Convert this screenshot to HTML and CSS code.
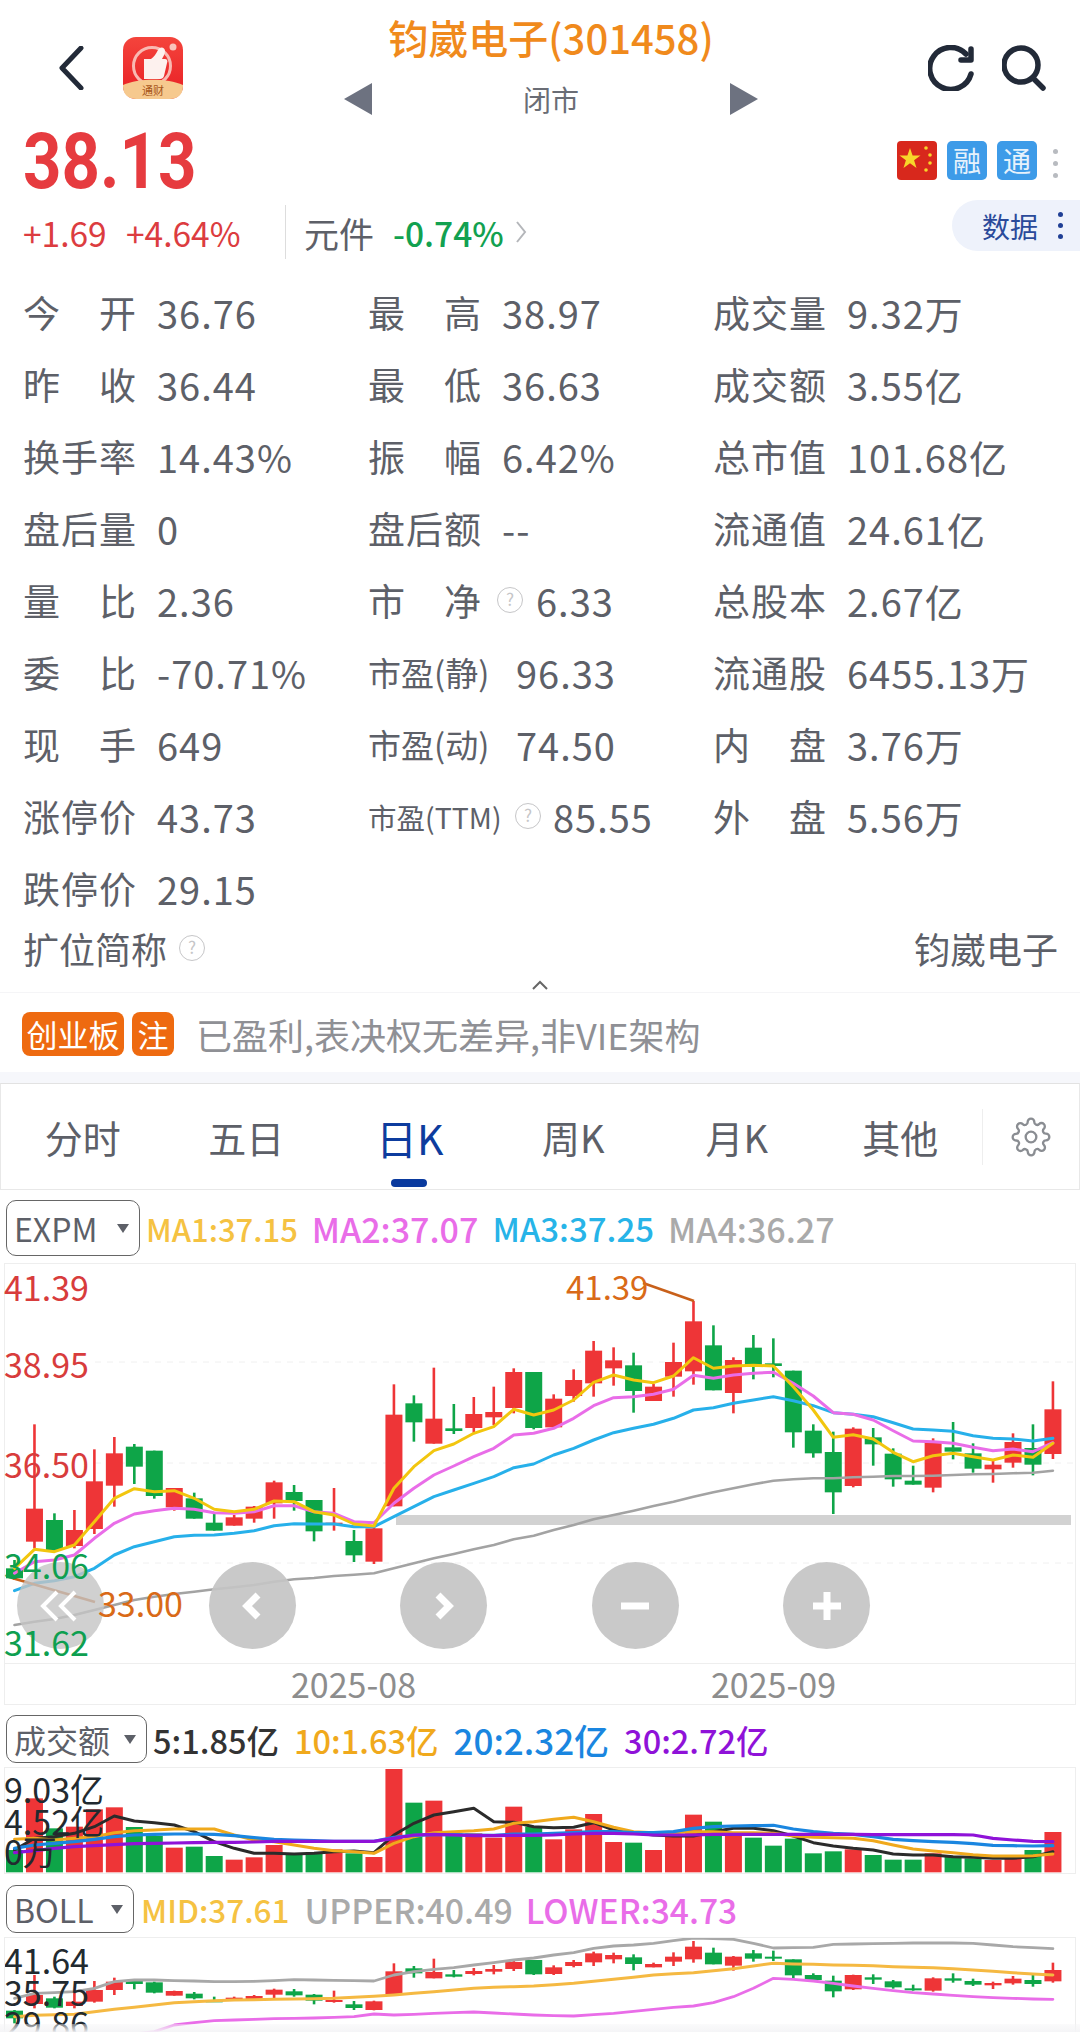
FILE: index.html
```html
<!DOCTYPE html>
<html lang="zh-CN">
  <head>
    <meta charset="UTF-8" />
    <meta name="viewport" content="width=device-width, initial-scale=1.0" />
    <title>钧崴电子(301458)</title>
    <link rel="stylesheet" href="styles.css">
  </head>
  <body>
    <header class="topbar">
      <div class="topbar-left">
        <svg class="back-icon" width="26" height="44" viewBox="0 0 26 44"><path d="M23 2 L4 22 L23 42" /></svg>
        <svg class="app-icon" width="60" height="62" viewBox="0 0 60 62">
          <defs>
            <linearGradient id="appRed" x1="0" y1="0" x2="0" y2="1">
              <stop offset="0" stop-color="#f4443c" />
              <stop offset="1" stop-color="#e81e24" />
            </linearGradient>
          </defs>
          <rect width="60" height="62" rx="13" fill="url(#appRed)" />
          <circle cx="29" cy="29" r="18.5" fill="none" stroke="#f9b9b2" stroke-width="3" />
          <path d="M21 22 H28 C31 20 33 17 35 13 C37 9 42 10 42 14 C42 17 40 20 39 22 H42 C44 22 45 24 44 26 L41 39 C40.5 41 39 42 37 42 H21 Z" fill="#fdf1ee" />
          <circle cx="50" cy="10" r="3.5" fill="#f9c4bc" />
          <path d="M0 48 C16 41 44 41 60 48 V49 C60 57 55 62 47 62 H13 C5 62 0 57 0 49 Z" fill="#f6c98e" />
          <text x="30" y="58" class="app-icon-text">通财</text>
        </svg>
      </div>
      <div class="topbar-center">
        <div class="stock-title">钧崴电子(301458)</div>
        <div class="stock-sub">
          <span class="tri tri-left"></span>
          <span class="market-state">闭市</span>
          <span class="tri tri-right"></span>
        </div>
      </div>
      <div class="topbar-right">
        <svg class="tool-icon" width="48" height="46" viewBox="0 0 48 46"><path d="M38 9 A21 21 0 1 0 43 29" /><path d="M43 4 V15 H33" /></svg>
        <svg class="tool-icon" width="44" height="46" viewBox="0 0 44 46"><circle cx="19" cy="20" r="17" /><path d="M31 33 L41 43" /></svg>
      </div>
    </header>

    <section class="quote-top">
      <div class="price">38.13</div>
      <div class="badges">
        <svg class="flag" width="40" height="39" viewBox="0 0 40 39">
          <rect width="40" height="39" rx="4" fill="#d8281c" />
          <polygon points="13,7 15.6,14.6 23.5,14.6 17.1,19.3 19.5,27 13,22.2 6.5,27 8.9,19.3 2.5,14.6 10.4,14.6" fill="#f8d62a" />
          <circle cx="29" cy="7" r="1.8" fill="#f8d62a" />
          <circle cx="33" cy="14" r="1.8" fill="#f8d62a" />
          <circle cx="33" cy="22" r="1.8" fill="#f8d62a" />
          <circle cx="29" cy="29" r="1.8" fill="#f8d62a" />
        </svg>
        <span class="badge">融</span>
        <span class="badge">通</span>
        <span class="dots dots-gray"><i></i><i></i><i></i></span>
      </div>
    </section>

    <section class="quote-sub">
      <div class="change">+1.69</div>
      <div class="change change-pct">+4.64%</div>
      <div class="sector">
        <span class="sector-name">元件</span>
        <span class="sector-pct">-0.74%</span>
        <svg class="sector-more" width="12" height="24" viewBox="0 0 12 24"><path d="M2 2 L10 12 L2 22" /></svg>
      </div>
      <div class="data-pill">数据<span class="dots dots-navy"><i></i><i></i><i></i></span></div>
    </section>

    <section class="stats">
      <div class="stat"><span class="stat-label">今开</span><span>36.76</span></div>
      <div class="stat"><span class="stat-label">最高</span><span>38.97</span></div>
      <div class="stat"><span class="stat-label">成交量</span><span>9.32万</span></div>

      <div class="stat"><span class="stat-label">昨收</span><span>36.44</span></div>
      <div class="stat"><span class="stat-label">最低</span><span>36.63</span></div>
      <div class="stat"><span class="stat-label">成交额</span><span>3.55亿</span></div>

      <div class="stat"><span class="stat-label">换手率</span><span>14.43%</span></div>
      <div class="stat"><span class="stat-label">振幅</span><span>6.42%</span></div>
      <div class="stat"><span class="stat-label">总市值</span><span>101.68亿</span></div>

      <div class="stat"><span class="stat-label">盘后量</span><span>0</span></div>
      <div class="stat"><span class="stat-label">盘后额</span><span>--</span></div>
      <div class="stat"><span class="stat-label">流通值</span><span>24.61亿</span></div>

      <div class="stat"><span class="stat-label">量比</span><span>2.36</span></div>
      <div class="stat"><span class="stat-label">市净</span><span class="help help-pe">?</span><span>6.33</span></div>
      <div class="stat"><span class="stat-label">总股本</span><span>2.67亿</span></div>

      <div class="stat"><span class="stat-label">委比</span><span>-70.71%</span></div>
      <div class="stat"><span class="stat-label stat-label-mid">市盈(静)</span><span>96.33</span></div>
      <div class="stat"><span class="stat-label">流通股</span><span>6455.13万</span></div>

      <div class="stat"><span class="stat-label">现手</span><span>649</span></div>
      <div class="stat"><span class="stat-label stat-label-mid">市盈(动)</span><span>74.50</span></div>
      <div class="stat"><span class="stat-label">内盘</span><span>3.76万</span></div>

      <div class="stat"><span class="stat-label">涨停价</span><span>43.73</span></div>
      <div class="stat"><span class="stat-label stat-label-small">市盈(TTM)</span><span class="help help-ttm">?</span><span>85.55</span></div>
      <div class="stat"><span class="stat-label">外盘</span><span>5.56万</span></div>

      <div class="stat"><span class="stat-label">跌停价</span><span>29.15</span></div>
    </section>

    <section class="short-name">
      <div class="short-name-label">扩位简称<span class="help help-short">?</span></div>
      <div>钧崴电子</div>
    </section>
    <div class="collapse">
      <svg width="18" height="10" viewBox="0 0 18 10"><path d="M2 9 L9 2 L16 9" /></svg>
    </div>

    <section class="tag-row">
      <span class="tag">创业板</span>
      <span class="tag tag-short">注</span>
      <span class="tag-text">已盈利,表决权无差异,非VIE架构</span>
    </section>
    <div class="band"></div>

    <nav class="tabs">
      <span class="tab">分时</span>
      <span class="tab">五日</span>
      <span class="tab tab-active">日K</span>
      <span class="tab">周K</span>
      <span class="tab">月K</span>
      <span class="tab">其他</span>
      <span class="tab-gear">
        <svg width="40" height="40" viewBox="0 0 24 24"><circle cx="12" cy="12" r="3.2" /><path d="M19.4 15a1.65 1.65 0 0 0 .33 1.82l.06.06a2 2 0 0 1 0 2.83 2 2 0 0 1-2.83 0l-.06-.06a1.65 1.65 0 0 0-1.82-.33 1.65 1.65 0 0 0-1 1.51V21a2 2 0 0 1-2 2 2 2 0 0 1-2-2v-.09A1.65 1.65 0 0 0 9 19.4a1.65 1.65 0 0 0-1.82.33l-.06.06a2 2 0 0 1-2.83 0 2 2 0 0 1 0-2.83l.06-.06a1.65 1.65 0 0 0 .33-1.82 1.65 1.65 0 0 0-1.51-1H3a2 2 0 0 1-2-2 2 2 0 0 1 2-2h.09A1.65 1.65 0 0 0 4.6 9a1.65 1.65 0 0 0-.33-1.82l-.06-.06a2 2 0 0 1 0-2.83 2 2 0 0 1 2.83 0l.06.06a1.65 1.65 0 0 0 1.82.33H9a1.65 1.65 0 0 0 1-1.51V3a2 2 0 0 1 2-2 2 2 0 0 1 2 2v.09a1.65 1.65 0 0 0 1 1.51 1.65 1.65 0 0 0 1.82-.33l.06-.06a2 2 0 0 1 2.83 0 2 2 0 0 1 0 2.83l-.06.06a1.65 1.65 0 0 0-.33 1.82V9a1.65 1.65 0 0 0 1.51 1H21a2 2 0 0 1 2 2 2 2 0 0 1-2 2h-.09a1.65 1.65 0 0 0-1.51 1z" /></svg>
      </span>
    </nav>

    <div class="legend legend-main">
      <span class="picker picker-expm">EXPM<i class="caret"></i></span>
      <span class="c-yellow">MA1:37.15</span>
      <span class="c-pink ma-wide">MA2:37.07</span>
      <span class="c-sky ma-mid">MA3:37.25</span>
      <span class="c-gray ma-wide">MA4:36.27</span>
    </div>

    <div class="chart chart-main">
      <svg id="kline" width="1070" height="399"></svg>
      <div class="pan-buttons">
        <span class="pan-button">
          <svg width="44" height="36" viewBox="0 0 44 36"><path d="M18 4 L4 18 L18 32 M36 4 L22 18 L36 32" class="pan-thin" /></svg>
        </span>
        <span class="pan-button">
          <svg width="22" height="30" viewBox="0 0 22 30"><path d="M17 4 L6 15 L17 26" /></svg>
        </span>
        <span class="pan-button">
          <svg width="22" height="30" viewBox="0 0 22 30"><path d="M5 4 L16 15 L5 26" /></svg>
        </span>
        <span class="pan-button">
          <svg width="32" height="32" viewBox="0 0 32 32"><path d="M2 16 H30" /></svg>
        </span>
        <span class="pan-button">
          <svg width="32" height="32" viewBox="0 0 32 32"><path d="M2 16 H30 M16 2 V30" /></svg>
        </span>
      </div>
      <span class="axis axis-red axis-1">41.39</span>
      <span class="axis axis-red axis-2">38.95</span>
      <span class="axis axis-red axis-3">36.50</span>
      <span class="axis axis-green axis-4">34.06</span>
      <span class="axis axis-green axis-5">31.62</span>
      <span class="mark mark-low">33.00</span>
      <span class="mark mark-high">41.39</span>
    </div>
    <div class="dates">
      <span>2025-08</span>
      <span>2025-09</span>
    </div>

    <div class="legend legend-vol">
      <span class="picker picker-vol">成交额<i class="caret"></i></span>
      <span class="c-dark">5:1.85亿</span>
      <span class="c-amber">10:1.63亿</span>
      <span class="c-blue vol-wide">20:2.32亿</span>
      <span class="c-purple">30:2.72亿</span>
    </div>
    <div class="chart chart-vol">
      <svg id="volume" width="1070" height="105"></svg>
      <span class="axis axis-dark vol-1">9.03亿</span>
      <span class="axis axis-dark vol-2">4.52亿</span>
      <span class="axis axis-dark vol-3">0万</span>
    </div>

    <div class="legend legend-boll">
      <span class="picker picker-boll">BOLL<i class="caret"></i></span>
      <span class="c-yellow">MID:37.61</span>
      <span class="c-gray boll-upper">UPPER:40.49</span>
      <span class="c-pink boll-lower">LOWER:34.73</span>
    </div>
    <div class="chart chart-boll">
      <svg id="boll" width="1070" height="94"></svg>
      <span class="axis axis-dark boll-1">41.64</span>
      <span class="axis axis-dark boll-2">35.75</span>
      <span class="axis axis-dark boll-3">29.86</span>
    </div>
    <div class="bottom-fade"></div>

    <script src="chart.js"></script>
  </body>
</html>
```

FILE: styles.css
```css
* {
  box-sizing: border-box;
}

body {
  width: 1080px;
  height: 2032px;
  margin: 0;
  overflow: hidden;
  position: relative;
  background-color: #fff;
  color: #5d6068;
  font-family: "Noto Sans CJK SC", "Noto Sans", sans-serif;
}

/* top bar */
.topbar {
  display: flex;
  height: 130px;
}

.topbar-left {
  width: 344px;
  display: flex;
  align-items: flex-start;
  padding: 46px 0 0 58px;
}

.back-icon {
  fill: none;
  stroke: #222a38;
  stroke-width: 5;
  stroke-linecap: round;
  stroke-linejoin: round;
}

.app-icon {
  margin: -9px 0 0 39px;
}

.app-icon-text {
  font-size: 11px;
  fill: #a8561a;
  text-anchor: middle;
}

.topbar-center {
  width: 414px;
  display: flex;
  flex-direction: column;
  align-items: center;
}

.stock-title {
  height: 74px;
  line-height: 74px;
  white-space: nowrap;
  font-size: 40px;
  font-weight: 500;
  color: #f08a1c;
}

.stock-sub {
  width: 100%;
  height: 50px;
  display: flex;
  justify-content: space-between;
  align-items: center;
}

.tri {
  width: 0;
  height: 0;
  border-top: 16px solid transparent;
  border-bottom: 16px solid transparent;
}

.tri-left {
  border-right: 28px solid #6d7280;
}

.tri-right {
  border-left: 28px solid #6d7280;
}

.market-state {
  font-size: 28px;
  color: #6a6d75;
}

.topbar-right {
  flex: 1;
  display: flex;
  justify-content: flex-end;
  align-items: flex-start;
  gap: 26px;
  padding: 45px 34px 0 0;
}

.tool-icon {
  fill: none;
  stroke: #222a38;
  stroke-width: 5.5;
  stroke-linecap: round;
  stroke-linejoin: round;
}

/* quote */
.quote-top {
  height: 70px;
  display: flex;
  justify-content: space-between;
  padding-left: 23px;
}

.price {
  line-height: 64px;
  font-family: "Roboto", sans-serif;
  font-size: 78px;
  font-weight: 700;
  color: #e63b3f;
  transform: scaleX(0.86);
  transform-origin: left center;
}

.badges {
  display: flex;
  align-items: flex-start;
  gap: 10px;
  padding: 11px 0 0 0;
}

.badge {
  width: 40px;
  height: 39px;
  line-height: 38px;
  border-radius: 5px;
  background-color: #3d9be8;
  color: #e6f2fc;
  font-size: 28px;
  text-align: center;
}

.dots {
  display: flex;
  flex-direction: column;
  gap: 7px;
}

.dots i {
  display: block;
  width: 5px;
  height: 5px;
  border-radius: 50%;
  background-color: currentColor;
}

.dots-gray {
  color: #b8bbc0;
  padding: 8px 22px 0 6px;
}

.quote-sub {
  height: 78px;
  display: flex;
  padding: 0 0 14px 23px;
  align-items: center;
}

.change {
  width: 103px;
  font-size: 33.5px;
  color: #dc3c40;
}

.change-pct {
  width: 159px;
}

.sector {
  height: 54px;
  display: flex;
  align-items: center;
  padding-left: 18px;
  border-left: 1px solid #ddd;
  white-space: nowrap;
}

.sector-name {
  width: 89px;
  font-size: 35px;
}

.sector-pct {
  width: 122px;
  font-size: 33.5px;
  font-weight: 500;
  color: #12a150;
}

.sector-more {
  fill: none;
  stroke: #b4b6ba;
  stroke-width: 2;
}

.data-pill {
  margin: -13px 0 0 auto;
  width: 128px;
  height: 51px;
  display: flex;
  align-items: center;
  padding-left: 30px;
  border-radius: 26px 0 0 26px;
  background-color: #eef2fb;
  color: #2a4a9a;
  font-size: 28px;
}

.dots-navy {
  color: #1f3f95;
  gap: 6px;
  margin-left: 20px;
}

/* stat grid */
.stats {
  display: grid;
  grid-template-columns: 345px 345px 1fr;
  grid-auto-rows: 72px;
  margin-top: -2px;
  padding-left: 23px;
  font-size: 37px;
}

.stat {
  display: flex;
  align-items: center;
  white-space: nowrap;
}

.stat span:last-child {
  font-size: 38px;
  letter-spacing: 1px;
}

.stat-label {
  width: 113px;
  margin-right: 21px;
  text-align-last: justify;
}

.stat-label-mid {
  width: 127px;
  font-size: 33px;
  text-align-last: auto;
}

.stat-label-small {
  width: 135px;
  margin-right: 12px;
  font-size: 28.5px;
  text-align-last: auto;
}

.help {
  display: inline-block;
  width: 26px;
  height: 26px;
  line-height: 22px;
  border: 1.5px solid #c6c6c8;
  border-radius: 50%;
  color: #c6c6c8;
  font-size: 17px;
  text-align: center;
}

.help-pe {
  margin: 0 13px 0 -5px;
}

.help-ttm {
  margin-right: 12px;
}

.help-short {
  margin-left: 12px;
}

.short-name {
  height: 48px;
  display: flex;
  justify-content: space-between;
  align-items: center;
  padding: 0 22px 0 23px;
  font-size: 36px;
}

.short-name-label {
  display: flex;
  align-items: center;
}

.collapse {
  height: 21px;
  display: flex;
  justify-content: center;
  align-items: flex-end;
  padding-bottom: 2px;
  border-bottom: 1px solid #f5f5f7;
}

.collapse svg {
  fill: none;
  stroke: #666;
  stroke-width: 2;
}

.tag-row {
  height: 79px;
  display: flex;
  align-items: center;
  padding: 3px 0 0 22px;
  gap: 8px;
}

.tag {
  width: 102px;
  height: 44px;
  line-height: 43px;
  border-radius: 8px;
  background-color: #ee6a10;
  color: #fff;
  font-size: 31px;
  text-align: center;
}

.tag-short {
  width: 42px;
}

.tag-text {
  margin-left: 14px;
  font-size: 36px;
  color: #8f9095;
  white-space: nowrap;
}

.band {
  height: 11px;
  background-color: #f6f7fb;
}

/* period tabs */
.tabs {
  height: 107px;
  display: flex;
  align-items: center;
  border: 1px solid #e8e8e8;
  border-top-color: #e2e2e2;
  font-size: 38px;
}

.tab {
  position: relative;
  width: 163.5px;
  height: 100%;
  line-height: 106px;
  text-align: center;
}

.tab-active {
  color: #0d3c9e;
  font-size: 41px;
}

.tab-active::after {
  content: "";
  position: absolute;
  left: 63px;
  bottom: 2px;
  width: 36px;
  height: 8px;
  border-radius: 4px;
  background-color: #0a3a9e;
}

.tab-gear {
  height: 56px;
  flex: 1;
  display: flex;
  justify-content: center;
  align-items: center;
  border-left: 1px solid #eee;
}

.tab-gear svg {
  fill: none;
  stroke: #8a8d92;
  stroke-width: 1.4;
}

/* legends over each chart */
.legend {
  display: flex;
  align-items: center;
  padding-left: 6px;
  white-space: nowrap;
  font-size: 32px;
}

.legend-main {
  height: 73px;
  padding-top: 10px;
  padding-bottom: 7px;
  gap: 14px;
  font-size: 31px;
  font-weight: 500;
}

.legend-main .picker {
  margin-right: -8px;
  font-size: 32px;
}

.ma-wide {
  font-size: 34px;
}

.ma-mid {
  font-size: 33px;
}

.legend-vol {
  height: 62px;
  padding-top: 10px;
  padding-bottom: 4px;
  gap: 15px;
  font-size: 32.5px;
  font-weight: 500;
}

.legend-vol .picker {
  margin-right: -9px;
  font-size: 32px;
}

.vol-wide {
  font-size: 35px;
}

.legend-boll {
  height: 63px;
  padding-top: 11px;
  padding-bottom: 4px;
  gap: 7px;
  font-size: 31.5px;
  font-weight: 500;
}

.legend-boll .picker {
  font-size: 32px;
}

.boll-upper {
  margin-left: 8px;
  font-size: 33.8px;
}

.boll-lower {
  margin-left: 6px;
  font-size: 33.6px;
}

.picker {
  height: 100%;
  display: flex;
  align-items: center;
  justify-content: space-between;
  padding: 0 10px 0 7px;
  border: 1px solid #666;
  border-radius: 10px;
  color: #5d6068;
  font-weight: 400;
}

.picker-expm {
  width: 134px;
}

.picker-vol {
  width: 141px;
}

.picker-boll {
  width: 128px;
}

.caret {
  width: 0;
  height: 0;
  border-left: 6px solid transparent;
  border-right: 6px solid transparent;
  border-top: 9px solid #5d6068;
}

.c-yellow { color: #f5c242; }
.c-pink { color: #e96de8; }
.c-sky { color: #27b4e8; }
.c-gray { color: #aaa; }
.c-dark { color: #333; }
.c-amber { color: #f0a91c; }
.c-blue { color: #1a86e0; }
.c-purple { color: #8f12d8; }

/* chart boxes */
.chart {
  position: relative;
  margin: 0 4px;
  border: 1px solid #eee;
}

.chart svg {
  display: block;
}

.chart-main {
  height: 401px;
}

.chart-vol {
  height: 107px;
}

.chart-boll {
  height: 96px;
  overflow: hidden;
}

.axis {
  position: absolute;
  left: -1px;
  line-height: 40px;
  font-size: 34px;
  white-space: nowrap;
}

.axis-red { color: #d83c3c; }
.axis-green { color: #0e9f50; }
.axis-dark { color: #222a30; }

.axis-1 { top: 3px; }
.axis-2 { top: 80px; }
.axis-3 { top: 180px; }
.axis-4 { top: 281px; }
.axis-5 { top: 358px; }

.mark {
  position: absolute;
  line-height: 40px;
  color: #d96a18;
}

.mark-low {
  left: 93px;
  top: 319px;
  font-size: 34px;
}

.mark-high {
  left: 561px;
  top: 2px;
  font-size: 33px;
}

.pan-buttons {
  position: absolute;
  left: 12px;
  top: 298px;
  display: flex;
  gap: 104.5px;
}

.pan-button {
  width: 87px;
  height: 87px;
  display: flex;
  justify-content: center;
  align-items: center;
  border-radius: 50%;
  background-color: rgba(196, 196, 196, 0.92);
}

.pan-button svg {
  fill: none;
  stroke: #fff;
  stroke-width: 7;
  stroke-linejoin: miter;
}

.pan-button .pan-thin {
  stroke-width: 4;
}

.pan-button:first-child {
  background-color: rgba(196, 196, 196, 0.8);
}

.dates {
  height: 41px;
  margin: 0 4px;
  display: flex;
  align-items: center;
  gap: 297px;
  padding-left: 286px;
  border: 1px solid #eee;
  border-top: none;
  color: #8d8d8d;
  font-size: 34px;
}

.dates span {
  width: 123px;
  white-space: nowrap;
  line-height: 36px;
}

.vol-1 { top: 1px; }
.vol-2 { top: 33px; }
.vol-3 { top: 63px; }

.boll-1 { top: 2px; }
.boll-2 { top: 34px; }
.boll-3 { top: 65px; }

.bottom-fade {
  position: absolute;
  left: 0;
  right: 0;
  bottom: 0;
  height: 8px;
  background: linear-gradient(rgba(244, 244, 246, 0.4), rgba(244, 244, 246, 0.95));
}
```

FILE: chart.js
```js
// candles are [color, high, top, bottom, low], read off at 3x the pixel height
const RED = "#ee3537";
const GREEN = "#0ea548";

const kline = [
  ["g", 960, 985, 1015, 1020], ["r", 553, 806, 905, 925], ["g", 820, 840, 930, 935],
  ["r", 810, 870, 918, 925], ["r", 628, 724, 867, 882], ["r", 591, 640, 737, 800],
  ["g", 612, 620, 680, 732], ["g", 632, 632, 768, 776], ["r", 744, 744, 802, 812],
  ["g", 758, 775, 836, 836], ["g", 822, 848, 872, 872], ["r", 825, 832, 857, 857],
  ["r", 798, 800, 836, 848], ["r", 722, 727, 790, 836], ["g", 735, 756, 783, 812],
  ["g", 780, 780, 874, 904], ["r", 744, 848, 853, 872], ["g", 870, 903, 946, 966],
  ["r", 860, 865, 965, 972], ["r", 433, 524, 799, 799], ["g", 466, 490, 547, 605],
  ["r", 383, 536, 611, 611], ["g", 492, 565, 573, 582], ["r", 471, 522, 564, 578],
  ["r", 440, 516, 532, 555], ["r", 385, 396, 504, 520], ["g", 396, 396, 564, 568],
  ["r", 463, 476, 562, 565], ["r", 388, 420, 468, 485], ["r", 303, 332, 430, 470],
  ["r", 322, 361, 385, 437], ["g", 338, 376, 453, 518], ["r", 432, 440, 483, 483],
  ["r", 308, 366, 410, 470], ["r", 183, 244, 394, 434], ["g", 256, 316, 451, 451],
  ["r", 352, 360, 459, 520], ["g", 285, 323, 380, 418], ["g", 295, 370, 378, 412],
  ["g", 392, 392, 577, 623], ["g", 553, 572, 640, 653], ["g", 575, 636, 757, 822],
  ["r", 562, 566, 738, 742], ["g", 564, 592, 613, 677], ["g", 625, 641, 718, 740],
  ["g", 677, 722, 734, 734], ["r", 595, 606, 743, 757], ["g", 546, 622, 635, 658],
  ["g", 610, 640, 686, 698], ["r", 660, 674, 688, 728], ["r", 580, 606, 668, 683],
  ["g", 553, 624, 674, 706], ["r", 424, 508, 642, 657],
];

const ma1 = [985, 928, 935, 915, 845, 775, 746, 755, 752, 775, 808, 815, 808, 783, 785, 815, 825, 852, 858, 745, 680, 632, 612, 580, 560, 508, 525, 510, 480, 427, 405, 420, 428, 408, 353, 385, 378, 376, 378, 440, 510, 592, 584, 597, 637, 665, 647, 640, 650, 660, 645, 652, 610];
const ma2 = [1000, 965, 960, 945, 895, 850, 822, 812, 805, 808, 818, 820, 815, 797, 797, 815, 820, 845, 848, 790, 745, 705, 678, 650, 625, 585, 580, 565, 535, 497, 473, 470, 463, 448, 406, 415, 405, 400, 397, 430, 468, 518, 523, 540, 572, 603, 605, 610, 622, 632, 627, 635, 608];
const ma3 = [1052, 1030, 1022, 1010, 985, 945, 920, 905, 890, 886, 885, 880, 872, 857, 851, 852, 852, 860, 860, 830, 800, 770, 750, 730, 710, 683, 672, 645, 625, 600, 578, 565, 553, 535, 510, 503, 490, 480, 470, 482, 497, 518, 523, 530, 548, 567, 570, 574, 587, 595, 597, 603, 595];
const ma4 = [1155, 1145, 1137, 1125, 1110, 1095, 1080, 1070, 1062, 1055, 1048, 1042, 1035, 1025, 1018, 1014, 1008, 1004, 1000, 985, 970, 955, 942, 928, 915, 898, 887, 870, 855, 838, 825, 812, 798, 785, 770, 757, 745, 733, 722, 718, 715, 715, 712, 710, 708, 708, 707, 705, 703, 702, 700, 698, 692];

const bars = [510, 355, 445, 440, 388, 382, 441, 468, 503, 500, 528, 539, 532, 495, 520, 520, 508, 520, 531, 267, 368, 362, 460, 460, 473, 380, 440, 478, 448, 402, 486, 488, 510, 470, 404, 425, 465, 473, 497, 476, 520, 514, 508, 525, 539, 539, 520, 530, 535, 540, 530, 510, 456];
const vol5 = [510, 475, 470, 460, 440, 408, 423, 428, 435, 455, 485, 505, 520, 520, 522, 520, 515, 513, 518, 465, 430, 405, 395, 385, 425, 427, 440, 443, 442, 428, 450, 458, 465, 468, 468, 455, 445, 445, 452, 468, 488, 498, 505, 510, 522, 525, 525, 530, 532, 535, 535, 530, 515];
const vol10 = [478, 475, 480, 475, 470, 458, 452, 450, 447, 447, 447, 465, 480, 485, 495, 505, 512, 515, 520, 490, 470, 458, 455, 452, 447, 430, 425, 418, 412, 425, 442, 455, 458, 458, 455, 455, 458, 458, 460, 468, 472, 473, 475, 482, 495, 507, 513, 518, 524, 528, 528, 527, 522];
const vol20 = [505, 495, 490, 485, 478, 470, 465, 463, 462, 462, 463, 467, 473, 478, 480, 482, 484, 484, 484, 472, 466, 464, 464, 465, 466, 462, 462, 460, 458, 455, 455, 458, 458, 455, 445, 440, 438, 437, 436, 447, 455, 460, 463, 470, 478, 482, 485, 487, 491, 496, 497, 498, 497];
const vol30 = [518, 512, 505, 500, 497, 494, 491, 490, 489, 488, 487, 487, 486, 484, 484, 484, 484, 484, 484, 475, 465, 463, 465, 467, 467, 466, 466, 465, 462, 460, 460, 462, 465, 465, 465, 463, 463, 463, 463, 463, 463, 463, 463, 464, 464, 464, 464, 464, 465, 475, 480, 484, 485];

const bollCandles = [
  ["g", 990, 992, 1015, 1030], ["r", 885, 945, 972, 985], ["g", 950, 955, 983, 985],
  ["r", 935, 965, 978, 985], ["r", 903, 930, 965, 968], ["r", 893, 905, 930, 945],
  ["g", 897, 903, 912, 928], ["g", 905, 907, 938, 940], ["r", 932, 933, 947, 947],
  ["g", 936, 941, 955, 958], ["g", 950, 961, 964, 964], ["r", 950, 953, 962, 962],
  ["r", 945, 948, 958, 960], ["r", 926, 929, 944, 954], ["g", 927, 934, 946, 950],
  ["g", 942, 944, 962, 973], ["r", 932, 960, 963, 968], ["g", 963, 973, 984, 990],
  ["r", 962, 964, 990, 991], ["r", 850, 874, 945, 945], ["g", 858, 865, 880, 893],
  ["r", 836, 876, 895, 895], ["g", 870, 883, 890, 892], ["r", 864, 873, 882, 886],
  ["r", 855, 867, 875, 883], ["r", 840, 846, 867, 873], ["g", 840, 840, 883, 885],
  ["r", 856, 862, 882, 885], ["r", 840, 846, 858, 862], ["r", 815, 820, 847, 858],
  ["r", 818, 825, 838, 850], ["g", 823, 832, 852, 871], ["r", 848, 852, 862, 862],
  ["r", 817, 830, 845, 858], ["r", 783, 800, 838, 848], ["g", 803, 818, 853, 853],
  ["r", 828, 830, 857, 872], ["g", 810, 820, 836, 845], ["g", 812, 830, 835, 843],
  ["g", 838, 838, 886, 898], ["g", 880, 885, 900, 905], ["g", 887, 902, 934, 952],
  ["r", 884, 885, 928, 930], ["g", 883, 892, 899, 912], ["g", 900, 904, 922, 926],
  ["g", 914, 925, 930, 932], ["r", 892, 895, 932, 935], ["g", 880, 895, 902, 908],
  ["g", 896, 903, 914, 918], ["r", 905, 909, 916, 927], ["r", 888, 896, 910, 914],
  ["g", 884, 900, 912, 920], ["r", 848, 870, 904, 908],
];

const bollUpper = [955, 940, 938, 935, 925, 905, 900, 900, 902, 903, 905, 905, 904, 902, 899, 900, 901, 902, 903, 885, 875, 868, 863, 855, 848, 840, 834, 825, 818, 805, 798, 795, 790, 782, 774, 776, 778, 790, 804, 803, 802, 793, 792, 791, 790, 789, 789, 789, 790, 795, 800, 803, 806];
const bollMid = [1010, 1006, 1004, 1003, 995, 988, 982, 975, 968, 965, 962, 960, 959, 958, 957, 956, 955, 952, 949, 945, 940, 935, 930, 925, 922, 920, 918, 914, 910, 904, 898, 892, 885, 881, 878, 872, 866, 858, 850, 852, 853, 855, 856, 857, 860, 862, 863, 866, 870, 874, 878, 882, 885];
const bollLower = [1120, 1110, 1100, 1090, 1080, 1072, 1062, 1055, 1035, 1028, 1022, 1020, 1018, 1016, 1015, 1014, 1012, 1010, 1002, 1005, 1003, 1000, 998, 996, 999, 1002, 1005, 1007, 1008, 1004, 1000, 994, 988, 982, 978, 968, 950, 925, 895, 898, 903, 910, 918, 925, 932, 938, 942, 946, 950, 953, 955, 957, 958];

function cx(i) {
  return 9.5 + 19.97 * i;
}

function candles(list, offset) {
  return list.map(function (c, i) {
    const fill = c[0] === "r" ? RED : GREEN;
    const x = cx(i);
    const wick = '<rect x="' + (x - 1.3) + '" y="' + (c[1] / 3 - offset) + '" width="2.6" height="' + (c[4] - c[1]) / 3 + '" fill="' + fill + '" />';
    const body = '<rect x="' + (x - 8.5) + '" y="' + (c[2] / 3 - offset) + '" width="17" height="' + Math.max((c[3] - c[2]) / 3, 2) + '" fill="' + fill + '" />';
    return wick + body;
  }).join("");
}

function line(values, color, offset, width) {
  const points = values.map(function (v, i) {
    return cx(i).toFixed(1) + "," + (v / 3 - offset).toFixed(1);
  }).join(" ");
  return '<polyline points="' + points + '" fill="none" stroke="' + color + '" stroke-width="' + width + '" stroke-linejoin="round" stroke-linecap="round" />';
}

function dash(y) {
  return '<line x1="90" x2="1070" y1="' + y + '" y2="' + y + '" stroke="#f0f0f0" stroke-width="1" stroke-dasharray="6 6" />';
}

function drawMain() {
  const offset = 24;
  let html = dash(98) + dash(199) + dash(299);
  html += '<rect x="391" y="251" width="675" height="10" fill="#d2d2d2" />';
  html += candles(kline, offset);
  html += line(ma4, "#a3a3a3", offset, 2.6);
  html += line(ma3, "#27b0ea", offset, 3);
  html += line(ma2, "#e96de8", offset, 3);
  html += line(ma1, "#f2c60e", offset, 3);
  html += '<path d="M7 314 L90 338" fill="none" stroke="#c8601a" stroke-width="2.6" />';
  html += '<path d="M638 19 L689 37" fill="none" stroke="#c8601a" stroke-width="2.6" />';
  document.getElementById("kline").innerHTML = html;
}

function drawVolume() {
  const offset = 88;
  let html = bars.map(function (top, i) {
    const fill = kline[i][0] === "r" ? RED : GREEN;
    return '<rect x="' + (cx(i) - 8.5) + '" y="' + (top / 3 - offset) + '" width="17" height="' + (577 - top) / 3 + '" fill="' + fill + '" />';
  }).join("");
  html += line(vol5, "#2b2b2b", offset, 3);
  html += line(vol10, "#f0a91c", offset, 3);
  html += line(vol20, "#1a86e0", offset, 3.2);
  html += line(vol30, "#8f12d8", offset, 3.2);
  document.getElementById("volume").innerHTML = html;
}

function drawBoll() {
  const offset = 258;
  let html = candles(bollCandles, offset);
  html += line(bollUpper, "#a8a8a8", offset, 2.8);
  html += line(bollMid, "#f5b942", offset, 3);
  html += line(bollLower, "#e96de8", offset, 2.8);
  document.getElementById("boll").innerHTML = html;
}

drawMain();
drawVolume();
drawBoll();
```
